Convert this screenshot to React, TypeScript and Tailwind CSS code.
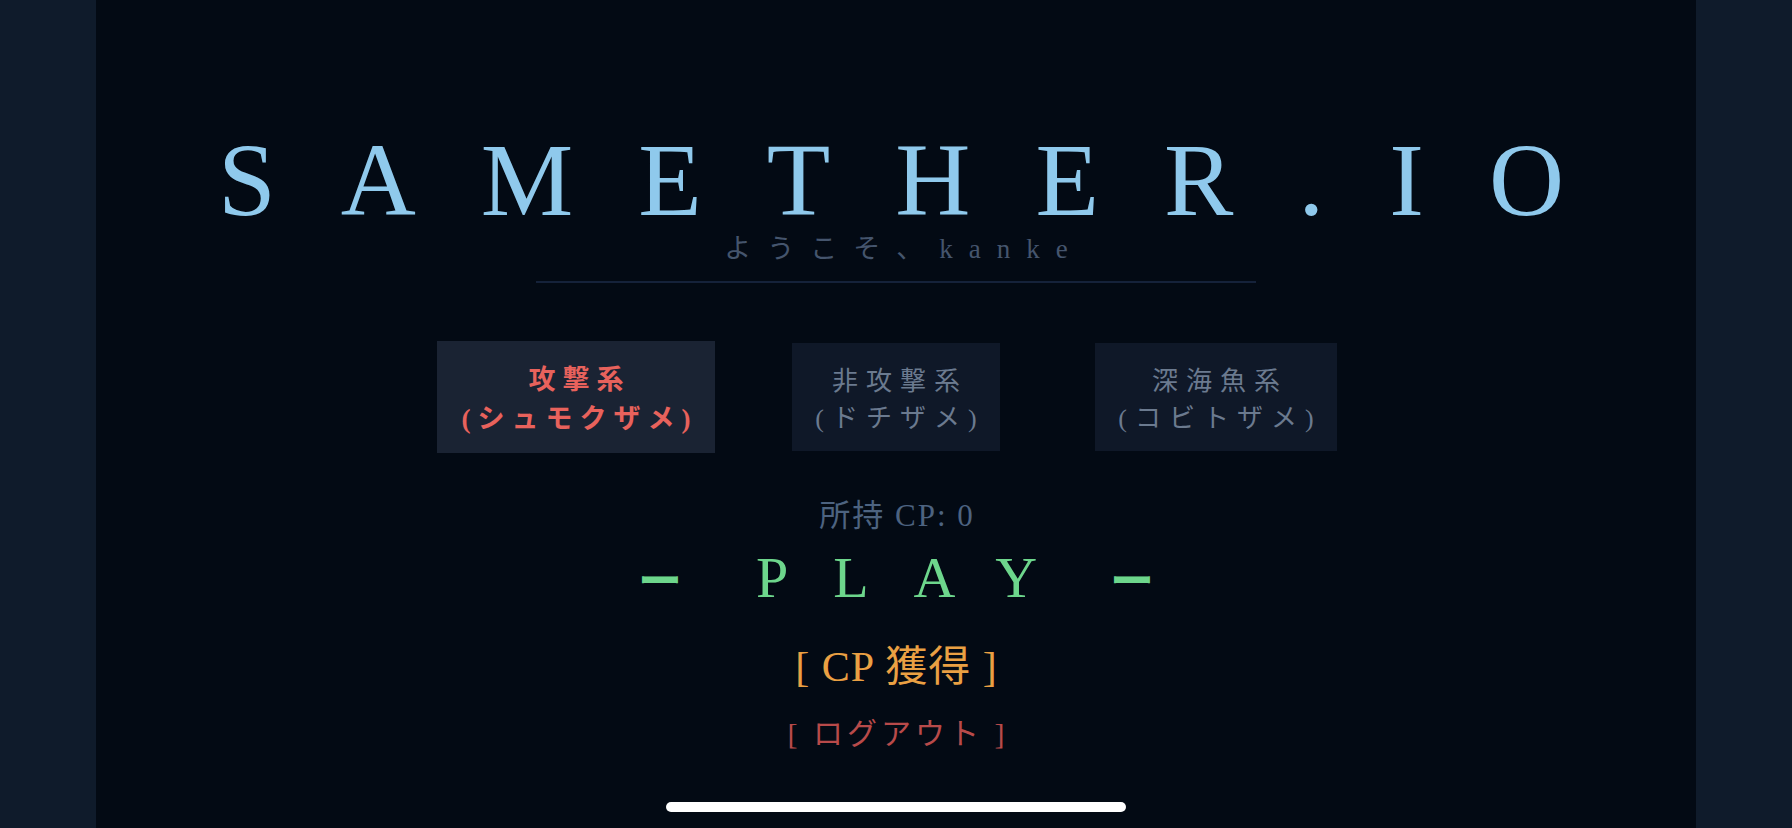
import React from "react";

const serif = "font-['Liberation_Serif','Noto_Sans_CJK_JP',serif]";

type Kind = {
  title: string;
  shark: string;
};

const kinds: Kind[] = [
  { title: "攻撃系", shark: "(シュモクザメ)" },
  { title: "非攻撃系", shark: "(ドチザメ)" },
  { title: "深海魚系", shark: "(コビトザメ)" },
];

function KindButton({
  kind,
  active,
  className,
}: {
  kind: Kind;
  active?: boolean;
  className: string;
}) {
  return (
    <button
      className={`flex flex-col items-center justify-center whitespace-nowrap pt-[5px] ${className} ${
        active
          ? "bg-[#1a2333] text-[#e8625c] font-bold text-[27px] leading-[39px] tracking-[7px] pl-[7px]"
          : "bg-[#0f1828] text-[#6b7a8f] text-[26px] leading-[37px] tracking-[8px] pl-[8px]"
      }`}
    >
      <span>{kind.title}</span>
      <span>{kind.shark}</span>
    </button>
  );
}

export default function App() {
  return (
    <div className={`flex h-[828px] w-full overflow-hidden bg-[#0f1b2b] ${serif}`}>
      <div className="w-[96px] shrink-0" />

      <main className="relative flex flex-1 flex-col items-center bg-[#030a14]">
        {/* logo */}
        <h1 className="mt-[128px] whitespace-nowrap pl-[55px] text-[104px] leading-none tracking-[65px] text-[#8fc9ec]">
          SAMETHER.IO
        </h1>
        <p className="mt-[4px] whitespace-nowrap pl-[16px] text-[27px] leading-none tracking-[16px] text-[#45556d]">
          ようこそ、kanke
        </p>
        <div className="mt-[18px] h-[2px] w-[720px] bg-[#15223a]" />

        {/* shark type */}
        <div className="mt-[58px] grid h-[112px] w-full grid-cols-[1fr_auto_1fr] items-center">
          <KindButton
            kind={kinds[0]}
            active
            className="mr-[77px] h-[112px] w-[278px] justify-self-end"
          />
          <KindButton kind={kinds[1]} className="h-[108px] w-[208px]" />
          <KindButton
            kind={kinds[2]}
            className="ml-[95px] h-[108px] w-[242px] justify-self-start"
          />
        </div>

        <p className="mt-[47px] whitespace-nowrap pl-[2px] text-[31px] leading-none tracking-[2px] text-[#4d6380]">
          所持 CP: 0
        </p>

        <button className="mt-[18px] flex h-[58px] items-center text-[#6dd68c]">
          <span className="font-['Noto_Sans_CJK_JP',sans-serif] text-[44px] font-bold leading-none">
            ー
          </span>
          <span className="ml-[74px] mr-[28px] text-[58px] leading-none tracking-[45px]">
            PLAY
          </span>
          <span className="font-['Noto_Sans_CJK_JP',sans-serif] text-[44px] font-bold leading-none">
            ー
          </span>
        </button>

        <button className="mt-[39px] whitespace-nowrap pl-[1px] text-[42px] leading-none tracking-[1px] text-[#eaa043]">
          [ CP 獲得 ]
        </button>
        <button className="mt-[31px] whitespace-nowrap pl-[4px] text-[30px] leading-none tracking-[4px] text-[#b84a4a]">
          [ ログアウト ]
        </button>

        {/* home indicator */}
        <div className="absolute bottom-[16px] left-1/2 h-[10px] w-[460px] -translate-x-1/2 rounded-full bg-white" />
      </main>

      <div className="w-[96px] shrink-0" />
    </div>
  );
}
